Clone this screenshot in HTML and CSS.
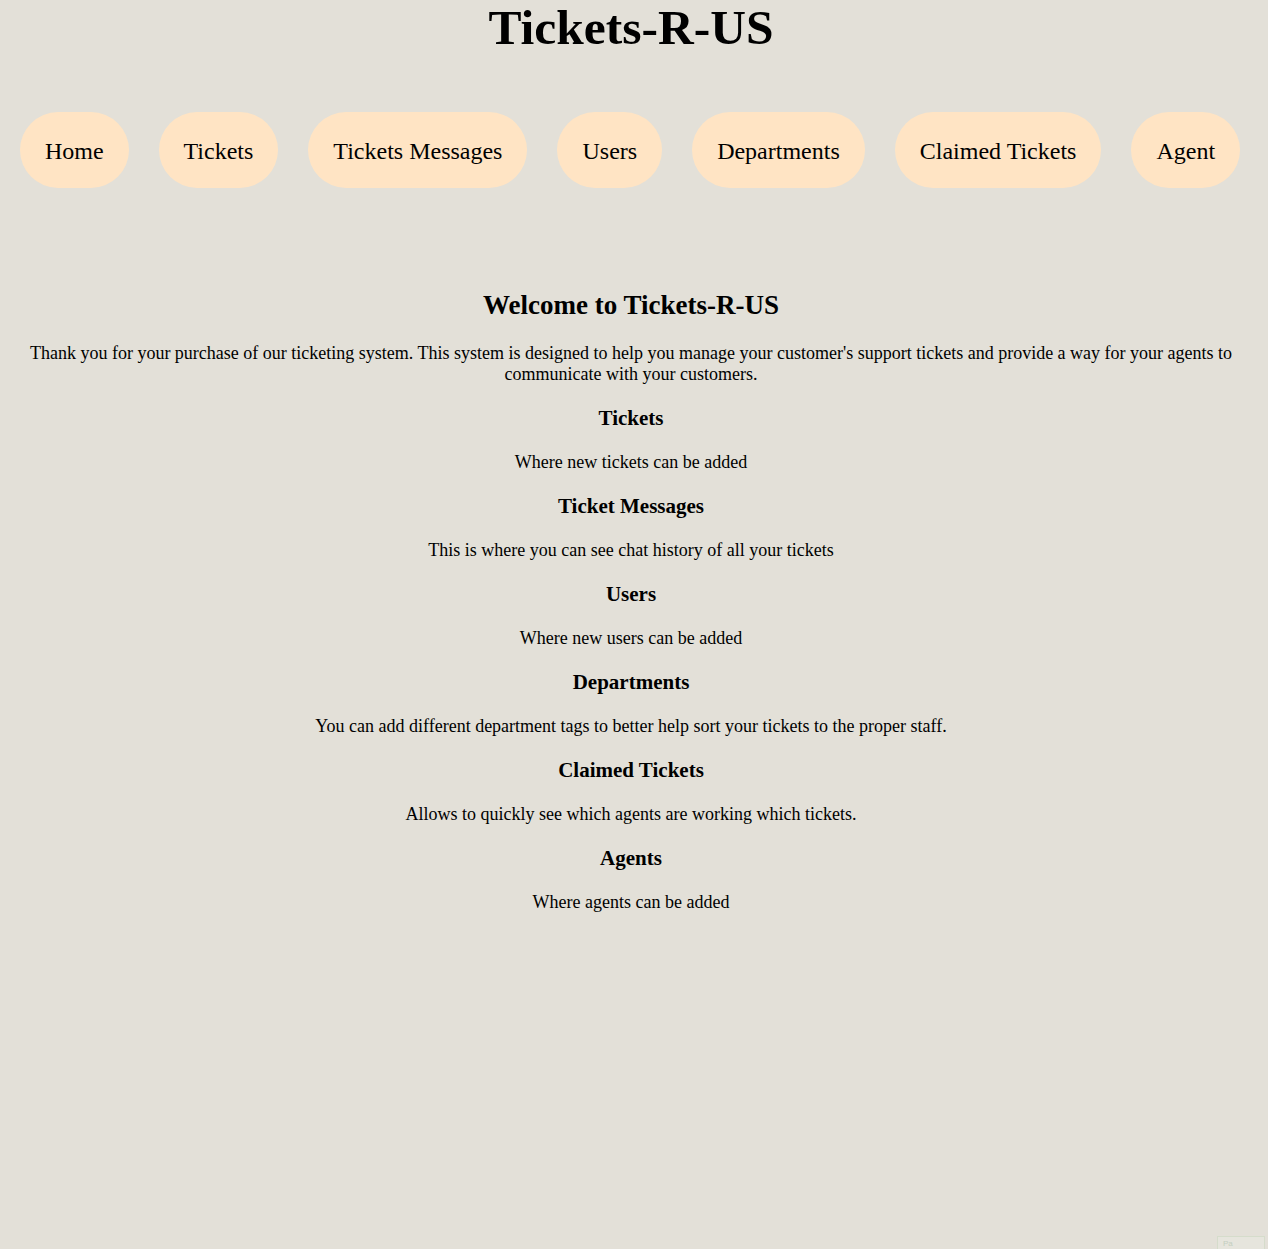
FILE: index.html
```html
<!DOCTYPE html>
<html lang="en">
<head>
<meta charset="utf-8">
<title>Tickets-R-US</title>
<link rel="stylesheet" href="styles.css">
</head>
<body>
<header class="site-header">
  <h1 class="site-title">Tickets-R-US</h1>
</header>
<nav class="main-nav">
  <a class="nav-pill" href="#">Home</a>
  <a class="nav-pill" href="#">Tickets</a>
  <a class="nav-pill" href="#">Tickets Messages</a>
  <a class="nav-pill" href="#">Users</a>
  <a class="nav-pill" href="#">Departments</a>
  <a class="nav-pill" href="#">Claimed Tickets</a>
  <a class="nav-pill" href="#">Agent</a>
</nav>
<main class="content">
  <h2 class="welcome">Welcome to Tickets-R-US</h2>
  <p>Thank you for your purchase of our ticketing system. This system is designed to help you manage your customer's support tickets and provide a way for your agents to communicate with your customers.</p>
  <h3>Tickets</h3>
  <p>Where new tickets can be added</p>
  <h3>Ticket Messages</h3>
  <p>This is where you can see chat history of all your tickets</p>
  <h3>Users</h3>
  <p>Where new users can be added</p>
  <h3>Departments</h3>
  <p>You can add different department tags to better help sort your tickets to the proper staff.</p>
  <h3>Claimed Tickets</h3>
  <p>Allows to quickly see which agents are working which tickets.</p>
  <h3>Agents</h3>
  <p>Where agents can be added</p>
</main>
<div class="corner-widget"><span class="corner-text">Pa</span></div>
</body>
</html>
```
FILE: styles.css
```css
html, body {
  margin: 0;
  padding: 0;
}
body {
  background: #e3e0d8;
  color: #000;
  font-family: "Liberation Serif", "Times New Roman", serif;
  font-size: 18px;
  min-height: 1249px;
  overflow: hidden;
  padding-right: 6px;
}
.site-header {
  text-align: center;
}
.site-title {
  margin: 0;
  font-size: 49.5px;
  font-weight: bold;
  line-height: 56px;
}
.main-nav {
  display: flex;
  justify-content: center;
  gap: 30px;
  margin-top: 56px;
  padding-right: 2px;
}
.nav-pill {
  display: block;
  background: #ffe4c4;
  color: #000;
  text-decoration: none;
  font-size: 24px;
  line-height: 27px;
  padding: 26px 25px 23px;
  border-radius: 38px;
  white-space: nowrap;
}
.content {
  text-align: center;
  padding: 79px 16px 0;
}
.welcome {
  font-size: 27px;
  margin: 23px 0 22px;
}
.content p {
  margin: 18px 0;
}
.content h3 {
  font-size: 21px;
  margin: 21px 0;
}
.corner-widget {
  position: fixed;
  left: 1217px;
  top: 1236px;
  width: 48px;
  height: 13px;
  box-sizing: border-box;
  border: 1px solid #d5dccb;
  border-bottom: none;
  background: #e6e5dd;
  overflow: hidden;
}
.corner-text {
  display: block;
  padding: 2px 0 0 5px;
  font-family: "Liberation Sans", Arial, sans-serif;
  font-size: 8px;
  line-height: 9px;
  color: #c3cfc0;
}
```
